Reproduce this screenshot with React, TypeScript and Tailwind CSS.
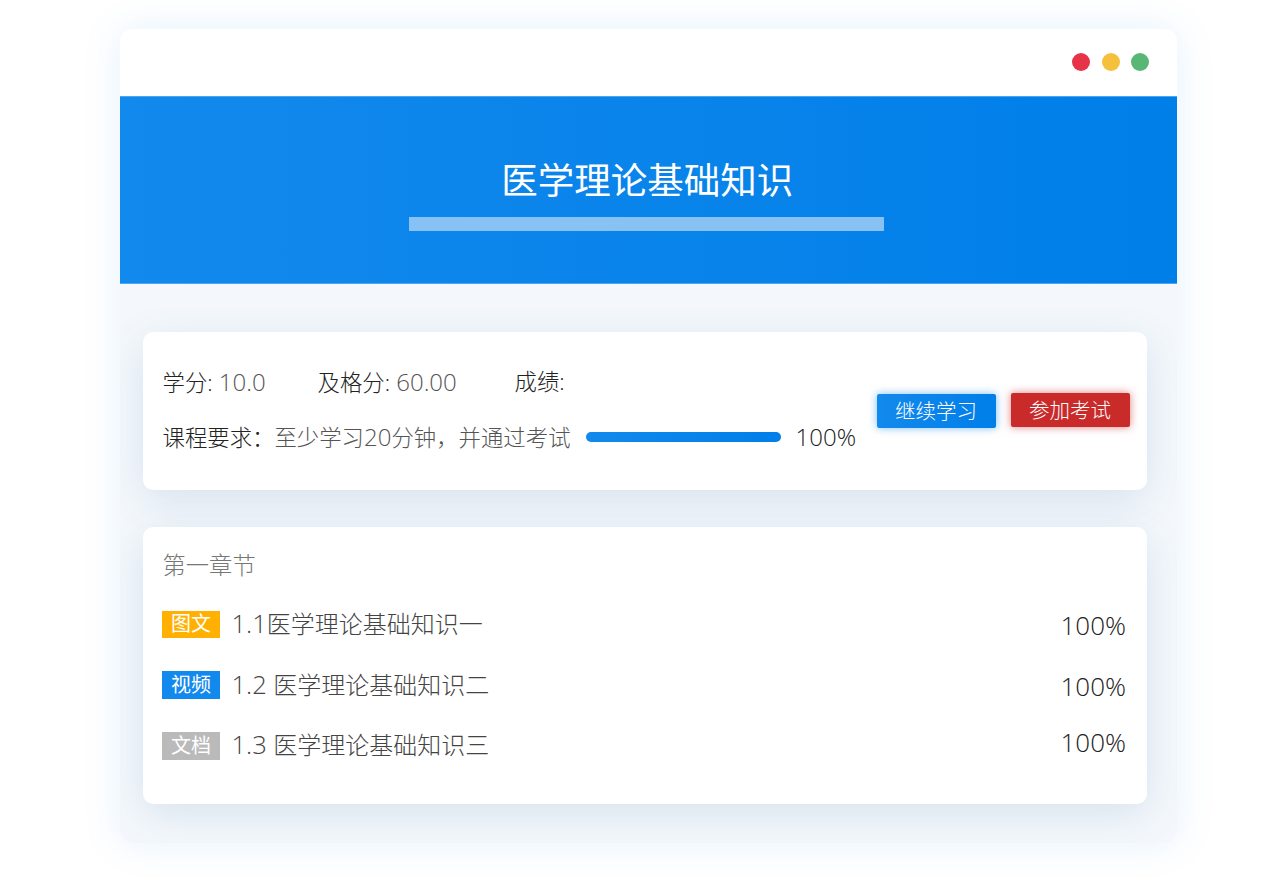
const FONT = "font-['Open_Sans','Noto_Sans_CJK_SC',sans-serif]";

const LESSONS = [
  { tag: "图文", tagClass: "bg-[#ffb000]", num: "1.1", title: "医学理论基础知识一", rowClass: "h-[27.5px] mt-[28.5px]", pctClass: "mt-[3px]" },
  { tag: "视频", tagClass: "bg-[#1289ec]", num: "1.2 ", title: "医学理论基础知识二", rowClass: "h-[27.5px] mt-[33px]", pctClass: "mt-[3px]" },
  { tag: "文档", tagClass: "bg-[#bababa]", num: "1.3 ", title: "医学理论基础知识三", rowClass: "h-[28px] mt-[33px]", pctClass: "mt-[-6px]" },
];

function Stat({ label, value, className }: { label: string; value?: string; className?: string }) {
  return (
    <span className={className}>
      <span className="text-[#222]">{label}</span>
      {value && <span className="text-[24px] text-[#555]"> {value}</span>}
    </span>
  );
}

export default function App() {
  return (
    <div className={`h-[890px] w-[1280px] overflow-hidden bg-white pl-[119.5px] pt-[29px] ${FONT} font-light`}>
      <div className="h-[814px] w-[1057.5px] overflow-hidden rounded-[12px] bg-[#f4f8fc] shadow-[0_0_40px_rgba(20,130,230,0.1)]">
        <div className="flex h-[67px] items-center justify-end gap-[11.5px] bg-white pb-[1.5px] pr-[28px]">
          <span className="h-[18px] w-[18px] rounded-full bg-[#e63348]" />
          <span className="h-[18px] w-[18px] rounded-full bg-[#f5c03c]" />
          <span className="h-[18px] w-[18px] rounded-full bg-[#58b774]" />
        </div>

        <div className="flex h-[188px] flex-col items-center border-y border-[#4ba6f2] bg-gradient-to-r from-[#1289ec] to-[#007fe9] pt-[60px]">
          <h1 className="mr-[2px] text-[36.5px] leading-[46px] font-normal text-white">医学理论基础知识</h1>
          <div className="mr-[3px] mt-[13.5px] h-[14.5px] w-[475px] bg-[#88c2f5]" />
        </div>

        <div className="pl-[23.5px] pr-[30px] pt-[48px]">
          <div className="flex h-[158px] items-center rounded-[10px] bg-white pl-[19.5px] shadow-[0_10px_40px_rgba(40,90,140,0.14)]">
            <div className="mt-[-2px] text-[22.4px] leading-[32px]">
              <div className="flex">
                <Stat label="学分:" value="10.0" className="w-[155px]" />
                <Stat label="及格分:" value="60.00" className="w-[197px]" />
                <Stat label="成绩:" />
              </div>
              <div className="mt-[22px] flex items-center">
                <span className="text-[#222]">课程要求：</span>
                <span className="text-[#555]">
                  至少学习<span className="text-[24px]">20</span>分钟，并通过考试
                </span>
                <div className="ml-[15px] mt-[-1px] h-[10px] w-[195px] rounded-full bg-gradient-to-r from-[#1289ec] to-[#007fe9]" />
                <span className="ml-[15px] mt-[-2px] text-[24px] text-[#222]">100%</span>
              </div>
            </div>
            <div className="ml-auto mr-[17.5px] flex items-center gap-[15px] text-[20.5px] text-white">
              <button className="h-[34.5px] w-[119px] rounded-[2px] bg-gradient-to-r from-[#1289ec] to-[#007fe9] shadow-[0_0_8px_rgba(18,137,236,0.55)]">
                继续学习
              </button>
              <button className="mt-[-2px] h-[34.5px] w-[119px] rounded-[2px] bg-[#c92a2a] shadow-[0_0_8px_rgba(201,42,42,0.6)]">
                参加考试
              </button>
            </div>
          </div>

          <div className="mt-[37px] h-[277px] rounded-[10px] bg-white pl-[19px] pr-[21px] pt-[21px] shadow-[0_10px_40px_rgba(40,90,140,0.14)]">
            <div className="pl-[0.5px] text-[23.3px] leading-[34px] text-[#777]">第一章节</div>
            {LESSONS.map((lesson) => (
              <div key={lesson.tag} className={`flex items-center ${lesson.rowClass}`}>
                <span className={`flex h-full w-[58px] items-center justify-center text-[20px] font-normal text-white ${lesson.tagClass}`}>
                  {lesson.tag}
                </span>
                <span className="ml-[11.5px] mt-[-2px] whitespace-pre text-[24px] text-[#444]">
                  <span className="text-[25.5px]">{lesson.num}</span>
                  {lesson.title}
                </span>
                <span className={`ml-auto text-[26px] text-[#222] ${lesson.pctClass}`}>100%</span>
              </div>
            ))}
          </div>
        </div>
      </div>
    </div>
  );
}
